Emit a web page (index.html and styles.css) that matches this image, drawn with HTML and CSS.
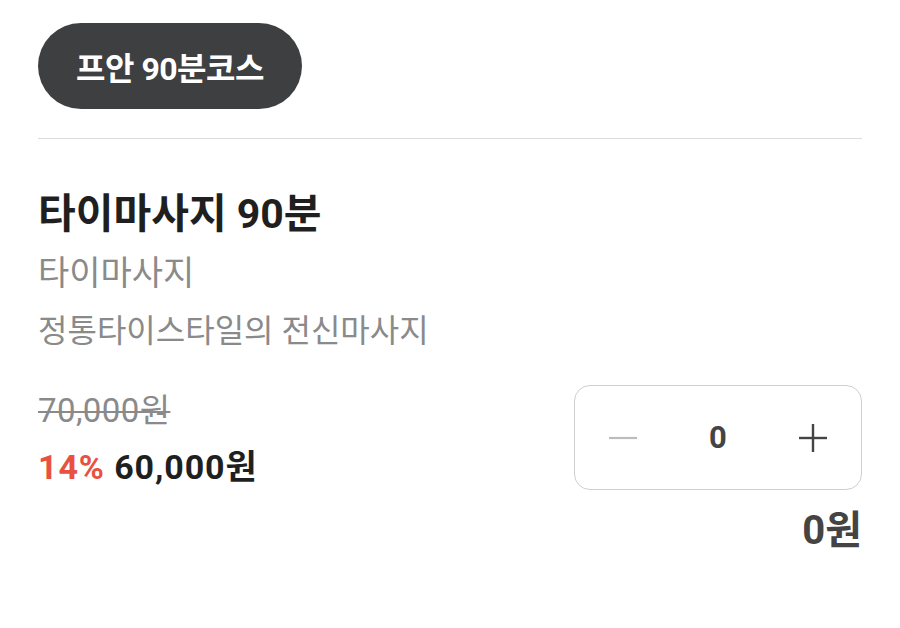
FILE: index.html
```html
<!DOCTYPE html>
<html lang="ko">
<head>
<meta charset="utf-8">
<link rel="stylesheet" href="styles.css">
</head>
<body>
<div class="page">
  <div class="tab-row">
    <span class="pill">프안 90분코스</span>
  </div>
  <hr class="divider">
  <div class="item">
    <h2 class="title">타이마사지 90분</h2>
    <div class="sub">타이마사지</div>
    <div class="desc">정통타이스타일의 전신마사지</div>
    <div class="bottom">
      <div class="prices">
        <div class="orig">70,000원</div>
        <div class="sale"><span class="rate">14%</span> 60,000원</div>
      </div>
      <div class="right">
        <div class="stepper">
          <span class="btn minus"><svg width="32" height="32" viewBox="0 0 32 32"><line x1="2" y1="16" x2="30" y2="16" stroke="#bdbdbd" stroke-width="2.2"/></svg></span>
          <span class="qty">0</span>
          <span class="btn plus"><svg width="32" height="32" viewBox="0 0 32 32"><line x1="2" y1="16" x2="30" y2="16" stroke="#444" stroke-width="2.4"/><line x1="16" y1="2" x2="16" y2="30" stroke="#444" stroke-width="2.4"/></svg></span>
        </div>
        <div class="total">0원</div>
      </div>
    </div>
  </div>
</div>
</body>
</html>
```

FILE: styles.css
```css
* { box-sizing: border-box; }
html, body { margin: 0; padding: 0; background: #fff; }
body {
  font-family: Roboto, "Noto Sans CJK KR", "Noto Sans", sans-serif;
  color: #222;
}
.page { padding: 23px 38px 0 38px; }
.tab-row { display: flex; }
.pill {
  display: inline-flex;
  align-items: center;
  justify-content: center;
  width: 264px;
  height: 86px;
  border-radius: 43px;
  background: #3e3f40;
  color: #fff;
  font-size: 32px;
  font-weight: 700;
  letter-spacing: -0.5px;
}
.divider {
  border: 0;
  border-top: 1.5px solid #dcdcdc;
  margin: 29px 0 0 0;
}
.item { padding-top: 50px; }
.title {
  margin: 0;
  font-size: 41px;
  font-weight: 700;
  line-height: 50px;
  color: #1f1f1f;
}
.sub {
  margin-top: 12px;
  font-size: 34px;
  line-height: 44px;
  color: #8a8a8a;
}
.desc {
  margin-top: 14px;
  font-size: 32px;
  line-height: 44px;
  color: #8a8a8a;
}
.bottom {
  display: flex;
  justify-content: space-between;
  align-items: flex-start;
  margin-top: 32px;
}
.prices { padding-top: 6px; }
.orig {
  font-size: 33px;
  line-height: 40px;
  color: #8a8a8a;
  letter-spacing: 0.4px;
  text-decoration: line-through;
  text-decoration-thickness: 2px;
}
.sale {
  margin-top: 15px;
  font-size: 34px;
  line-height: 42px;
  font-weight: 700;
  color: #1f1f1f;
  letter-spacing: 0.9px;
}
.rate { color: #e8513f; }
.right {
  display: flex;
  flex-direction: column;
  align-items: flex-end;
}
.stepper {
  width: 288px;
  height: 105px;
  border: 1.5px solid #cfcfcf;
  border-radius: 16px;
  display: flex;
  align-items: center;
  justify-content: space-between;
  padding: 0 32px;
}
.btn { display: flex; width: 32px; height: 32px; }
.qty {
  font-size: 31px;
  font-weight: 700;
  color: #444;
}
.total {
  margin-top: 16px;
  font-size: 40px;
  font-weight: 700;
  line-height: 50px;
  color: #444;
}
```
